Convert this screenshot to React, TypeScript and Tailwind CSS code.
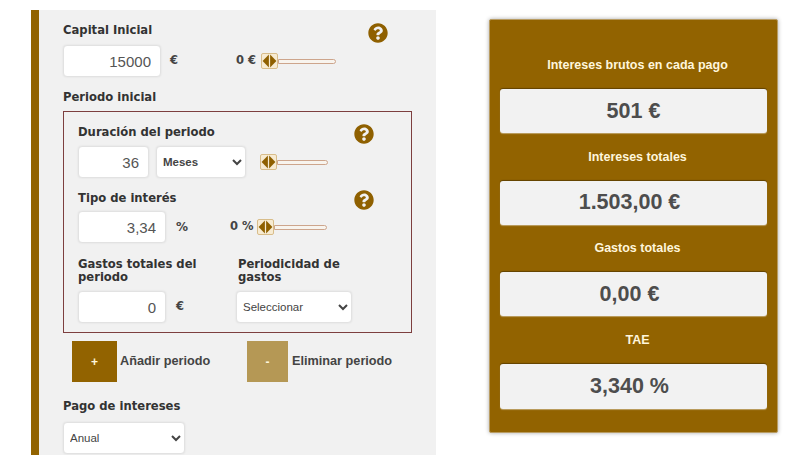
import React from 'react';
import { FaQuestionCircle } from 'react-icons/fa';

const Slider = ({ width }: { width: string }) => (
  <div className={`flex items-center ${width}`}>
    <svg width="17" height="16" viewBox="0 0 17 16" className="shrink-0">
      <rect x="0.5" y="0.5" width="16" height="15" rx="1.5" fill="#f7ebd2" stroke="#d8bd8a" />
      <path d="M7.9 1.5 L1.6 8 L7.9 14.5 Z" fill="#8f6000" />
      <path d="M9.1 1.5 L15.4 8 L9.1 14.5 Z" fill="#8f6000" />
    </svg>
    <div className="h-[5px] flex-1 rounded-r-full border border-[#cda58c] bg-[#f8f4ee]" />
  </div>
);

const Help = ({ className }: { className: string }) => (
  <FaQuestionCircle className={`shrink-0 text-[#8f6000] ${className}`} size={20} />
);

const Label = ({ children }: { children: React.ReactNode }) => (
  <div className="font-['DejaVu_Sans',sans-serif] text-[11.6px] leading-[13px] font-bold text-[#333]">
    {children}
  </div>
);

const Field = ({ value, className }: { value: string; className: string }) => (
  <input
    readOnly
    value={value}
    className={`h-8 rounded border border-[#e2e2e2] bg-white pr-[9px] text-right font-['Liberation_Sans',sans-serif] text-[15px] text-[#555] shadow-[0_0_2px_#ddd] ${className}`}
  />
);

const Pick = ({ value, className }: { value: string; className: string }) => (
  <select
    defaultValue={value}
    className={`h-8 rounded border border-[#e2e2e2] bg-white pl-0.5 font-['Liberation_Sans',sans-serif] text-[11.5px] text-[#444] shadow-[0_0_2px_#ddd] ${className}`}
  >
    <option>{value}</option>
  </select>
);

const Unit = ({ children, className = '' }: { children: React.ReactNode; className?: string }) => (
  <span className={`font-['DejaVu_Sans',sans-serif] text-[11.5px] font-bold text-[#444] ${className}`}>{children}</span>
);

const Result = ({ label, value, className }: { label: string; value: string; className: string }) => (
  <div className="flex flex-col">
    <div className="pl-2 text-center text-[12.5px] leading-[16px] font-bold text-[#fff6dc]">{label}</div>
    <div className={`mt-[16px] flex items-center justify-center rounded-[3px] bg-[#f2f2f2] text-[21.5px] font-bold text-[#4d4d4d] shadow-[0_-1px_1px_#00000055,0_1px_1px_#ffffff66] ${className}`}>
      {value}
    </div>
  </div>
);

export default function App() {
  return (
    <div className="flex h-[455px] w-[800px] items-start overflow-hidden bg-white font-['Liberation_Sans',sans-serif]">
      <section className="mt-2.5 ml-[31px] h-[445px] w-[405px] shrink-0 border-l-8 border-[#926300] bg-[#f1f1f1] pt-3 pl-6">
        <div className="flex h-4 items-center">
          <div className="w-[305px]"><Label>Capital Inicial</Label></div>
          <Help className="mt-[6px]" />
        </div>
        <div className="mt-[7px] flex items-center">
          <Field value="15000" className="w-[98px]" />
          <Unit className="ml-[9px] w-[66px]">€</Unit>
          <Unit className="w-[25px]">0 €</Unit>
          <Slider width="w-[75px]" />
        </div>
        <div className="mt-[14px]"><Label>Periodo inicial</Label></div>

        <div className="mt-[7px] h-[222px] w-[349px] border border-[#7d3f3f] pt-[12px] pl-[14px]">
          <div className="flex h-4 items-center">
            <div className="w-[276px]"><Label>Duración del periodo</Label></div>
            <Help className="mt-[4px]" />
          </div>
          <div className="mt-[6px] flex items-center">
            <Field value="36" className="w-[71px]" />
            <Pick value="Meses" className="ml-[7px] w-[90px] font-bold" />
            <div className="ml-[14px]"><Slider width="w-[68px]" /></div>
          </div>
          <div className="mt-[12px] flex h-4 items-center">
            <div className="w-[276px]"><Label>Tipo de interés</Label></div>
            <Help className="mt-[4px]" />
          </div>
          <div className="mt-[5px] flex items-center">
            <Field value="3,34" className="w-[88px]" />
            <Unit className="ml-[10px] w-[54px] text-[12px]">%</Unit>
            <Unit className="w-[27px]">0 %</Unit>
            <Slider width="w-[70px]" />
          </div>
          <div className="mt-[15px] flex">
            <div className="w-[160px]"><Label>Gastos totales del periodo</Label></div>
            <div className="w-[130px]"><Label>Periodicidad de gastos</Label></div>
          </div>
          <div className="mt-[7px] flex items-center">
            <Field value="0" className="w-[88px]" />
            <Unit className="ml-[10px] w-[60px]">€</Unit>
            <Pick value="Seleccionar" className="w-[116px]" />
          </div>
        </div>

        <div className="mt-[8px] ml-[9px] flex items-center text-[12.7px] font-bold text-[#444]">
          <div className="flex h-[41px] w-[45px] items-center justify-center bg-[#926300] text-[12px] text-[#fff6dc]">+</div>
          <span className="ml-[3px] w-[127px]">Añadir periodo</span>
          <div className="flex h-[41px] w-[41px] items-center justify-center bg-[#b59855] text-[12px] text-[#fff6dc]">-</div>
          <span className="ml-1">Eliminar periodo</span>
        </div>
        <div className="mt-[18px]"><Label>Pago de intereses</Label></div>
        <Pick value="Anual" className="mt-[9px] w-[122px]" />
      </section>

      <aside className="mt-[19px] ml-[53px] flex h-[414px] w-[289px] shrink-0 flex-col gap-[15.5px] rounded-[2px] border border-[#b89c63] bg-[#926300] pt-[37px] pr-[10px] pl-[10px] shadow-[0_0_4px_#00000055]">
        <Result label="Intereses brutos en cada pago" value="501 €" className="h-[44px]" />
        <Result label="Intereses totales" value="1.503,00 €" className="h-[44px] pr-2" />
        <Result label="Gastos totales" value="0,00 €" className="h-[44px] pr-2" />
        <Result label="TAE" value="3,340 %" className="h-[45px] pr-2" />
      </aside>
    </div>
  );
}
